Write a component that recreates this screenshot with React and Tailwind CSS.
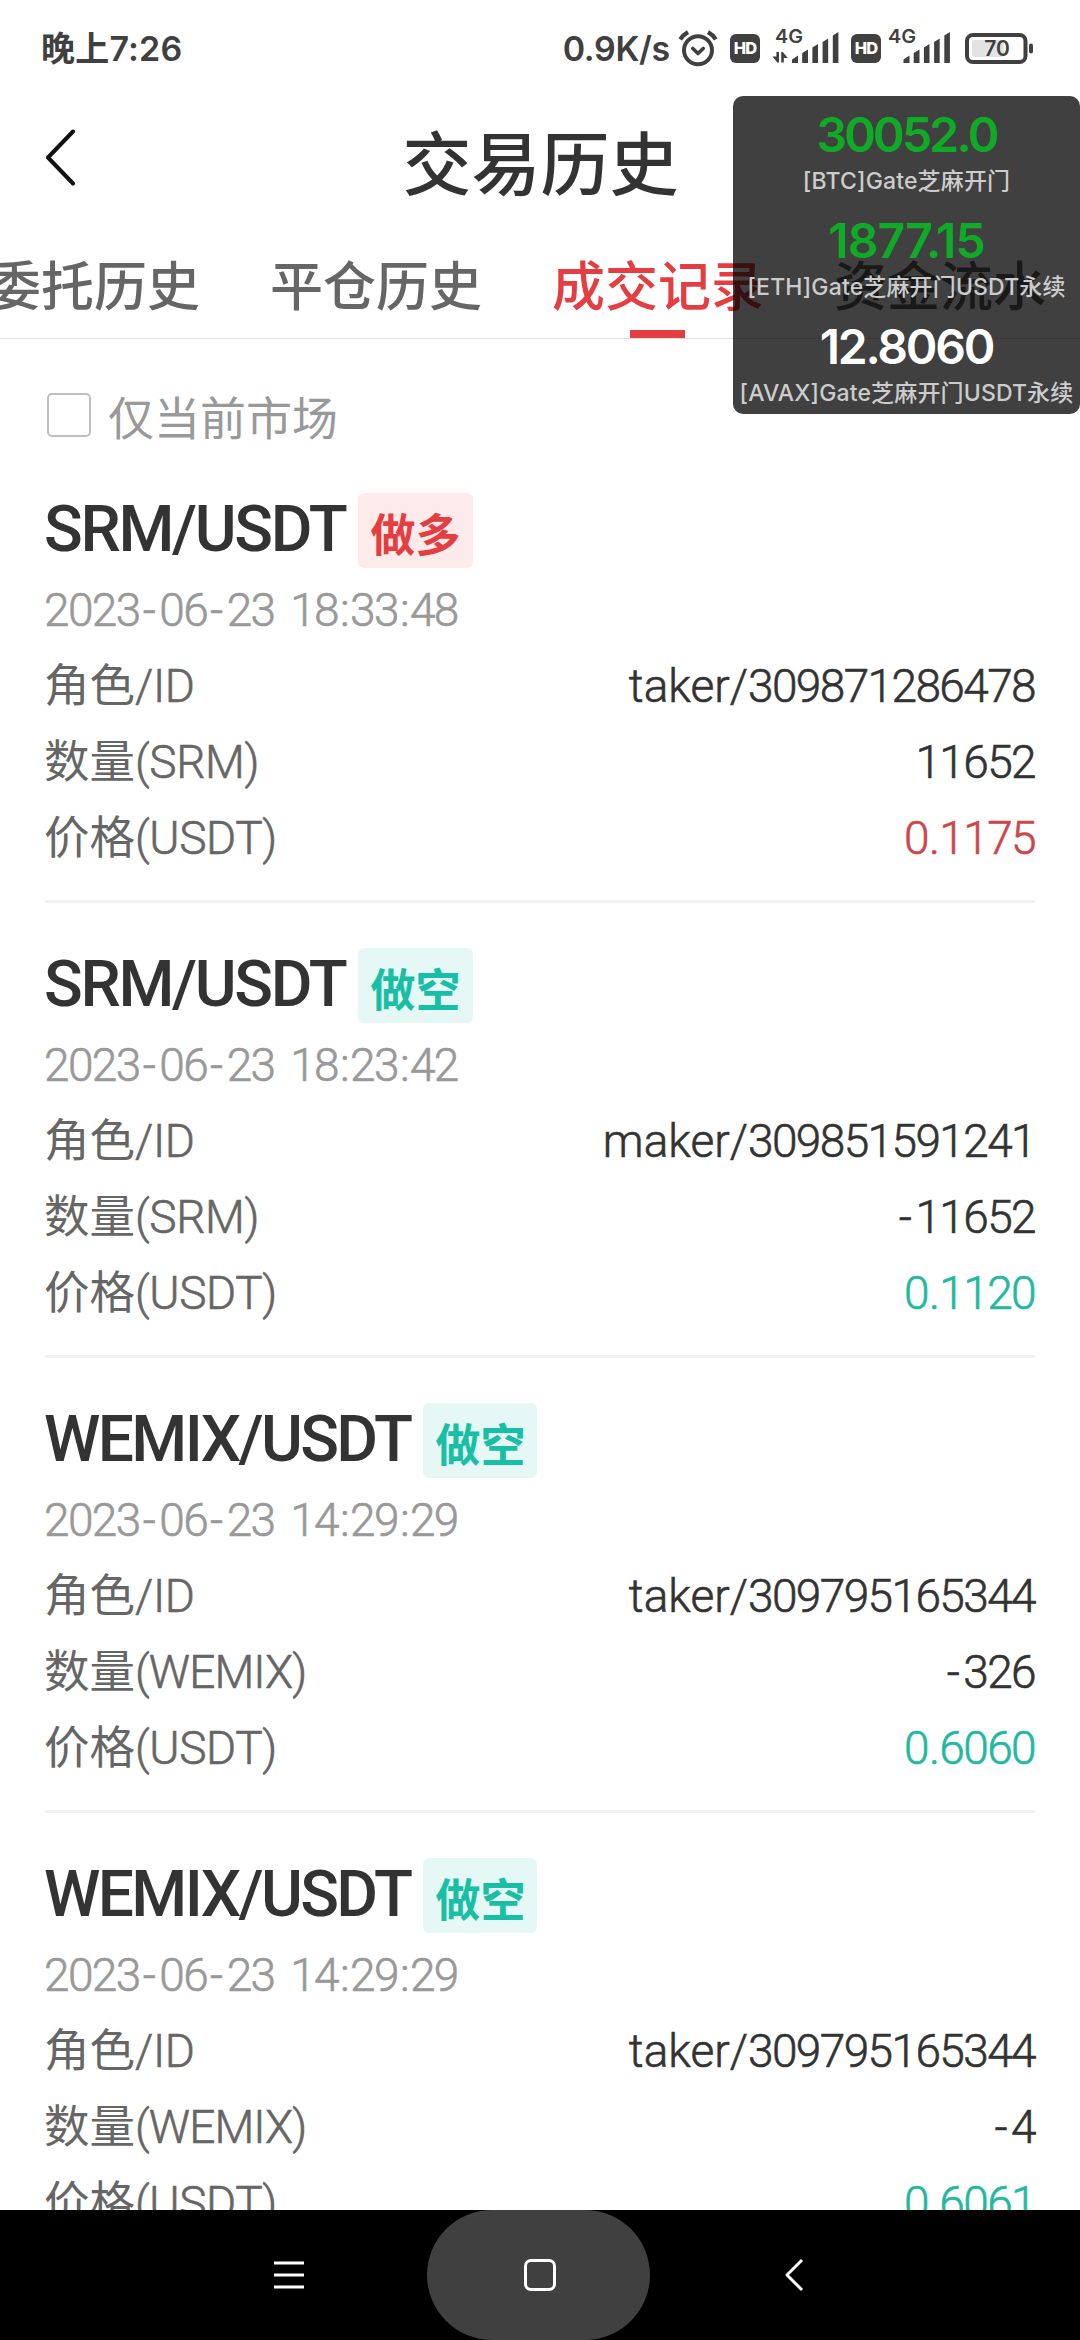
import { clsx } from 'clsx';

const TABS = ['委托历史', '平仓历史', '成交记录', '资金流水'];

const TICKERS = [
  { price: '30052.0', label: '[BTC]Gate芝麻开门', color: 'text-[#0fab27] tracking-[-2.8px]' },
  { price: '1877.15', label: '[ETH]Gate芝麻开门USDT永续', color: 'text-[#0fab27] tracking-[-0.9px]' },
  { price: '12.8060', label: '[AVAX]Gate芝麻开门USDT永续', color: 'text-white tracking-[-2.2px]' },
];

const TRADES = [
  { coin: 'SRM', side: 'long', time: '2023-06-23 18:33:48', role: 'taker', id: '309871286478', amount: '11652', price: '0.1175' },
  { coin: 'SRM', side: 'short', time: '2023-06-23 18:23:42', role: 'maker', id: '309851591241', amount: '-11652', price: '0.1120' },
  { coin: 'WEMIX', side: 'short', time: '2023-06-23 14:29:29', role: 'taker', id: '309795165344', amount: '-326', price: '0.6060' },
  { coin: 'WEMIX', side: 'short', time: '2023-06-23 14:29:29', role: 'taker', id: '309795165344', amount: '-4', price: '0.6061' },
];

const AlarmIcon = () => (
  <svg width="40" height="38" viewBox="0 0 40 38" fill="none" stroke="#404040" strokeLinecap="round">
    <circle cx="20" cy="21.3" r="14" strokeWidth="4" />
    <path d="M14.8 19.5l5.2 5 5.2-5" strokeWidth="3.6" strokeLinejoin="round" />
    <path d="M2.2 10.4Q5 6 10 3.2M30 3.2q5 2.8 7.8 7.2" strokeWidth="4.2" strokeLinecap="butt" />
  </svg>
);

const HdBadge = () => (
  <span className="flex h-[29px] w-[30px] items-center justify-center rounded-[6px] bg-[#404040] text-[16.5px] leading-none font-extrabold tracking-[-0.8px] text-white">
    HD
  </span>
);

const Signal = ({ data }) => (
  <svg className="overflow-visible" width="66" height="36" viewBox="0 0 66 36" fill="#404040">
    <text x={data ? 2 : 0} y="15" fontSize="18.5" fontWeight="600" fontFamily="Inter" textLength="28" lengthAdjust="spacingAndGlyphs">4G</text>
    {data && <path d="M6 24v10.5H4.4L-.6 28.6h4V24zM8.2 34.5V24h1.6l5 6h-4v4.5z" />}
    <g transform={data ? 'translate(19 0)' : 'translate(15.5 0)'}>
      <path d="M0 35v-3.5l6-4V35zM10.2 35V25l5.8-3.5V35zM20.4 35V19.5l5.6-3.5v19zM30.6 35V14l5.6-3.5V35zM40.8 35V7.5l5.6-3.5v31z" />
    </g>
  </svg>
);

const Battery = () => (
  <svg width="68" height="32" viewBox="0 0 68 32">
    <rect x="2" y="2" width="58.5" height="27" rx="6" fill="none" stroke="#404040" strokeWidth="4" />
    <rect x="7" y="7" width="32" height="17" rx="2" fill="#e3e3e3" />
    <rect x="64" y="10.5" width="4" height="10" rx="2" fill="#404040" />
    <text x="32" y="23" fontSize="21" fontWeight="600" fontFamily="Inter" fill="#404040" textAnchor="middle">70</text>
  </svg>
);

const StatusBar = () => (
  <div className="flex h-[96px] items-start pt-[28px] pr-[47px] pl-[41px] font-['Inter','Noto_Sans_CJK_SC',sans-serif] text-[#404040]">
    <span className="mt-[1px] text-[34px] leading-[40px] font-semibold tracking-[0.2px]">晚上7:26</span>
    <span className="mt-[1px] ml-auto text-[34px] leading-[40px] font-semibold tracking-[-0.3px]">0.9K/s</span>
    <div className="mt-[1px] ml-[8px]"><AlarmIcon /></div>
    <div className="mt-[6px] ml-[12px]"><HdBadge /></div>
    <div className="ml-[13px]"><Signal data /></div>
    <div className="mt-[6px] ml-[12px]"><HdBadge /></div>
    <div className="ml-[7px]"><Signal /></div>
    <div className="mt-[5px] ml-[11px]"><Battery /></div>
  </div>
);

const Header = () => (
  <div className="grid h-[134px] grid-cols-[1fr_auto_1fr] items-center">
    <button className="mb-[12px] ml-[44px]">
      <svg width="34" height="58" viewBox="0 0 34 58" fill="none" stroke="#111" strokeWidth="4" strokeLinecap="round" strokeLinejoin="round">
        <path d="M29 3.5L4 29.5l25 26" />
      </svg>
    </button>
    <h1 className="mt-[8px] ml-[1px] text-[69px] leading-[100px] font-medium text-[#333]">交易历史</h1>
  </div>
);

const Tabs = () => (
  <div className="flex h-[109px] justify-start gap-[70px] overflow-hidden border-b border-[#e0e0e0]">
    {TABS.map((tab, i) => (
      <button
        key={tab}
        className={clsx(
          'flex shrink-0 flex-col items-center text-[53px] leading-[80px] font-medium first:-ml-[12px]',
          i === 2 ? 'text-[#e43e42]' : 'text-[#666]'
        )}
      >
        <span className="mt-[18px]">{tab}</span>
        {i === 2 && <span className="mt-[2px] -ml-[2px] h-[8px] w-[55px] bg-[#e43e42]" />}
      </button>
    ))}
  </div>
);

const Digits = ({ value }) => (
  <span className="tracking-[-1.6px] [word-spacing:6px]">
    {value.split(/([-:.])/).map((part, i) => {
      if (part === '-') return <span key={i} className="mr-[5px] ml-[3px]">-</span>;
      if (part === ':') return <span key={i} className="mr-[2px] ml-[2px]">:</span>;
      if (part === '.') return <span key={i} className="mr-[1px] ml-[1px]">.</span>;
      return part;
    })}
  </span>
);

const Row = ({ label, unit, children }) => (
  <div className="flex h-[76px] items-center justify-between">
    <span className="-ml-[1px] text-[#666]">
      <span className="text-[45.5px] font-normal [-webkit-text-stroke:0px]">{label}</span>
      <span className={unit === '(WEMIX)' ? 'tracking-[-0.9px]' : 'tracking-[-0.4px]'}>{unit}</span>
    </span>
    <span className="text-[#333]">{children}</span>
  </div>
);

const Trade = ({ trade }) => {
  const isLong = trade.side === 'long';
  return (
    <div className="h-[455px] shrink-0 border-b-[3px] border-[#f2f2f2] text-[46px] leading-[76px] font-light">
      <div className="flex h-[124px] items-start">
        <h2
          className={clsx(
            '-ml-[1px] mt-[42px] text-[64px] leading-[80px] font-medium text-[#333]',
            trade.coin === 'WEMIX' ? 'tracking-[-2.6px]' : 'tracking-[-2.3px]'
          )}
        >
          {trade.coin}/USDT
        </h2>
        <span
          className={clsx(
            'mt-[45px] ml-[13px] flex h-[75px] items-center rounded-[6px] px-[12px] pt-[11px] text-[45px] leading-none font-bold',
            isLong ? 'bg-[#fdebec] text-[#e43e42]' : 'bg-[#e6f8f6] text-[#18bfa5]'
          )}
        >
          {isLong ? '做多' : '做空'}
        </span>
      </div>
      <div className="[-webkit-text-stroke:0.6px]">
        <div className="-ml-[1px] h-[76px] text-[#999]"><Digits value={trade.time} /></div>
        <Row label="角色" unit="/ID">{trade.role}/<Digits value={trade.id} /></Row>
        <Row label="数量" unit={`(${trade.coin})`}><Digits value={trade.amount} /></Row>
        <Row label="价格" unit="(USDT)">
          <span className={isLong ? 'text-[#ce454a]' : 'text-[#23b8a0]'}><Digits value={trade.price} /></span>
        </Row>
      </div>
    </div>
  );
};

const FloatingTicker = () => (
  <div className="absolute top-[96px] right-0 flex h-[318px] w-[347px] flex-col rounded-[10px] bg-black/75 text-center font-['Inter','Noto_Sans_CJK_SC',sans-serif]">
    {TICKERS.map((t) => (
      <div key={t.label} className="h-[106px] whitespace-nowrap">
        <div className={clsx('pt-[15px] text-[48px] leading-[48px] font-semibold', t.color)}>{t.price}</div>
        <div className="mt-[7px] text-[23px] leading-[30px] font-medium tracking-[0.15px] text-[#ccc]">{t.label}</div>
      </div>
    ))}
  </div>
);

const NavBar = () => (
  <nav className="grid h-[130px] shrink-0 grid-cols-[427px_223px_1fr] bg-black">
    <div className="flex items-center pl-[274px]">
      <svg width="30" height="30" viewBox="0 0 30 30" stroke="#fff" strokeWidth="3">
        <path d="M0 3h30M0 15h30M0 27h30" />
      </svg>
    </div>
    <div className="flex items-center justify-center rounded-full bg-[#404040]">
      <div className="ml-[2px] h-[32px] w-[32px] rounded-[7px] border-[3.5px] border-white" />
    </div>
    <div className="flex items-center pl-[134px]">
      <svg width="20" height="34" viewBox="0 0 20 34" fill="none" stroke="#fff" strokeWidth="3" strokeLinejoin="round">
        <path d="M18 2L3 17l15 15" />
      </svg>
    </div>
  </nav>
);

const App = () => (
  <div className="relative flex h-[2340px] w-[1080px] flex-col overflow-hidden bg-white font-['Roboto','Noto_Sans_CJK_SC',sans-serif]">
    <StatusBar />
    <Header />
    <Tabs />
    <label className="flex h-[109px] shrink-0 items-start gap-[17px] pt-[54px] pl-[47px] text-[46px] text-[#999]">
      <span className="h-[44px] w-[44px] rounded-[5px] border-[2px] border-[#bfbfbf]" />
      <span className="-mt-[1px] leading-[54px]">仅当前市场</span>
    </label>
    <main className="flex min-h-0 flex-1 flex-col overflow-hidden px-[45px]">
      {TRADES.map((trade, i) => (
        <Trade key={i} trade={trade} />
      ))}
    </main>
    <NavBar />
    <FloatingTicker />
  </div>
);

export default App;
